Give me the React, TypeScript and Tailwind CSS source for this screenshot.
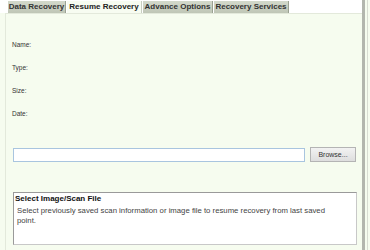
import React from "react";

const font = { fontFamily: '"Liberation Sans", Arial, sans-serif' };

function Tab({ label, w, active }: { label: string; w: string; active?: boolean }) {
  return (
    <div
      className={
        (active
          ? "bg-[#f7fcf1] border-r border-[#c8cec0] text-[#222] "
          : "bg-gradient-to-b from-[#d3d9cb] to-[#bfc6b6] border-r border-[#9aa292] text-[#333] ") +
        w +
        " h-[12px] flex items-center justify-center text-[8px] font-bold leading-none whitespace-nowrap"
      }
    >
      {label}
    </div>
  );
}

export default function App() {
  return (
    <div className="w-[370px] h-[250px] bg-[#f6fcef] flex overflow-hidden" style={font}>
      <div className="w-[362px] flex flex-col">
        <div className="h-[13px] flex items-end pl-[8px] gap-[1px] bg-white">
          <Tab label="Data Recovery" w="w-[58px]" />
          <Tab label="Resume Recovery" w="w-[75px]" active />
          <Tab label="Advance Options" w="w-[70px]" />
          <Tab label="Recovery Services" w="w-[75px]" />
        </div>
        <div className="flex-1 ml-[5px] border-l border-t border-[#e3e9db] bg-[#f6fcef] flex flex-col pl-[6px] pr-[5px]">
          <div className="flex flex-col text-[6.5px] text-[#333] leading-[9px] pt-[26px] gap-[14px]">
            <div>Name:</div>
            <div>Type:</div>
            <div>Size:</div>
            <div>Date:</div>
          </div>
          <div className="flex items-center mt-[29px] pl-[1px]">
            <div className="w-[292px] h-[14px] bg-white border border-[#a9c5df]" />
            <div className="ml-[5px] w-[46px] h-[15px] flex items-center justify-center bg-gradient-to-b from-[#f2f2f2] to-[#dedede] border border-[#b4b4b4] text-[7px] text-[#333] leading-none">
              Browse...
            </div>
          </div>
          <div className="mt-[30px] ml-[1px] w-[344px] h-[53px] bg-white border border-[#9a9a9a] border-r-[#c8c8c8] border-b-[#c8c8c8] px-[1px] pt-[1px]">
            <div className="text-[8px] font-bold text-[#111] leading-[10px]">Select Image/Scan File</div>
            <div className="w-[318px] text-[7.75px] text-[#444] leading-[10px] pl-[2px] pt-[2px]">
              Select previously saved scan information or image file to resume recovery from last saved point.
            </div>
          </div>
        </div>
      </div>
      <div className="w-[3px] bg-[#b3b6ae]" />
      <div className="w-[2px] bg-[#f6fcef]" />
      <div className="w-[1px] bg-[#d8dcd2]" />
      <div className="flex-1 bg-[#f6fcef]" />
    </div>
  );
}
